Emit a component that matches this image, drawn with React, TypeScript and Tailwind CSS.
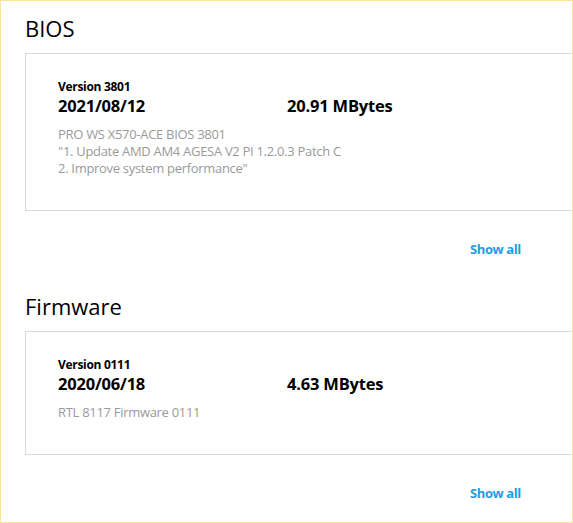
const font = { fontFamily: '"Open Sans", "Noto Sans", Arial, sans-serif' };

interface Release {
  title: string;
  version: string;
  date: string;
  size: string;
  notes: string[];
}

const releases: Release[] = [
  {
    title: 'BIOS',
    version: 'Version 3801',
    date: '2021/08/12',
    size: '20.91 MBytes',
    notes: [
      'PRO WS X570-ACE BIOS 3801',
      '"1. Update AMD AM4 AGESA V2 PI 1.2.0.3 Patch C',
      '2. Improve system performance"',
    ],
  },
  {
    title: 'Firmware',
    version: 'Version 0111',
    date: '2020/06/18',
    size: '4.63 MBytes',
    notes: ['RTL 8117 Firmware 0111'],
  },
];

function Section({ r }: { r: Release }) {
  return (
    <section>
      <h2 className="text-[22px] leading-[30px] text-black">{r.title}</h2>
      <div className="mt-[10px] w-[600px] border border-[#d9d9d9] pl-[32px] pt-[25px] pb-[33px]">
        <div className="text-[12px] leading-[16px] font-bold tracking-[-0.3px] text-black">{r.version}</div>
        <div className="flex text-[16.5px] leading-[22px] font-bold tracking-[-0.2px] text-black">
          <span className="w-[229px]">{r.date}</span>
          <span>{r.size}</span>
        </div>
        <div className="mt-[9px] text-[13px] leading-[17px] tracking-[-0.3px] text-[#9a9a9a]">
          {r.notes.map((n) => (
            <div key={n}>{n}</div>
          ))}
        </div>
      </div>
      <div className="h-[80px] pl-[445px] pt-[29px]">
        <a className="block text-[13px] leading-[18px] font-bold tracking-[-0.4px] text-[#1a9fe0]">Show all</a>
      </div>
    </section>
  );
}

export default function App() {
  return (
    <div
      className="h-[523px] w-[573px] overflow-hidden border border-[#fbe39b] bg-white pl-[24px] pt-[12px]"
      style={font}
    >
      {releases.map((r) => (
        <Section key={r.title} r={r} />
      ))}
    </div>
  );
}
